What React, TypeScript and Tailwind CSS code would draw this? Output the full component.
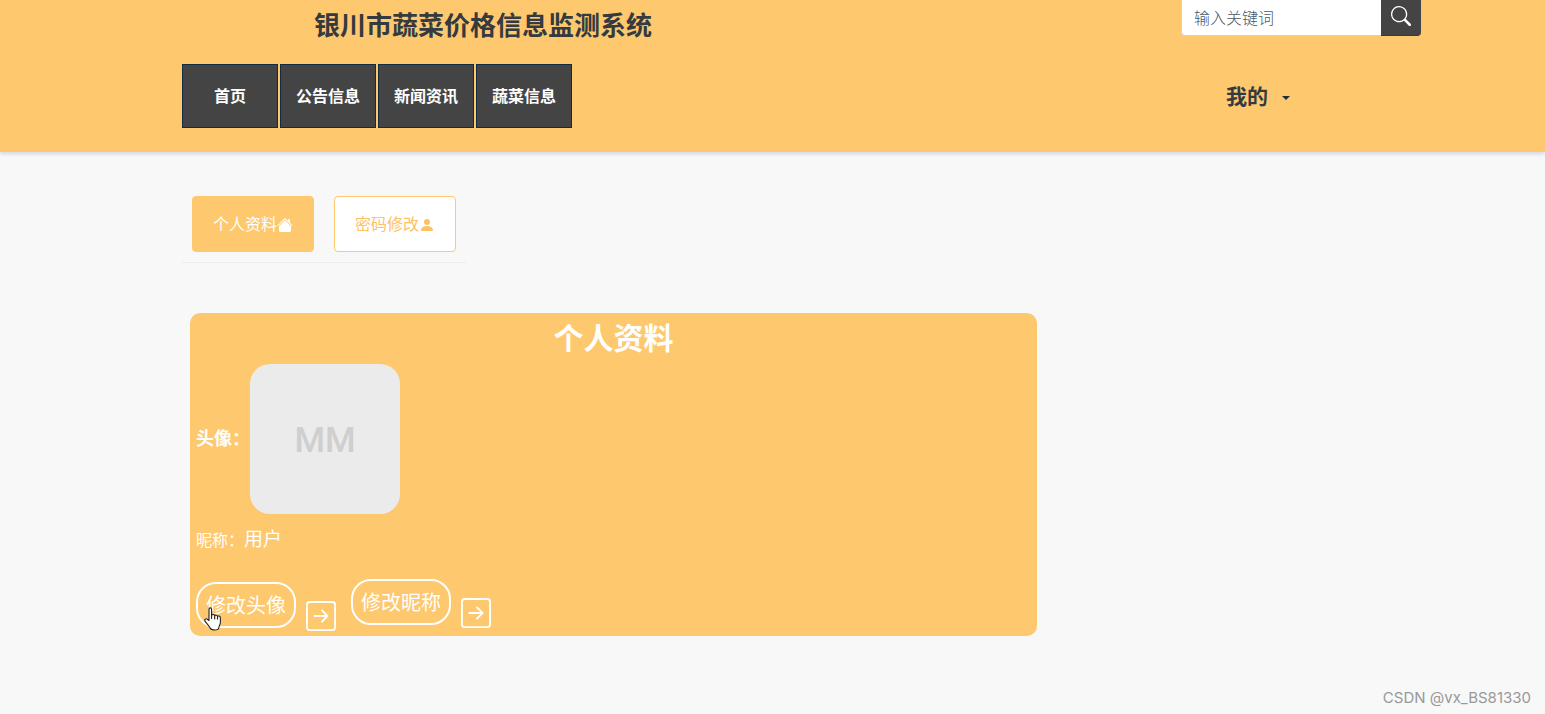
import {
  BsArrowRightSquare,
  BsHouseFill,
  BsPersonFill,
  BsSearch,
} from "react-icons/bs";

const navItems = ["首页", "公告信息", "新闻资讯", "蔬菜信息"];

function Header() {
  return (
    <header className="bg-[#fec86e] pb-6 shadow-[0_2px_4px_rgba(0,30,90,0.15)]">
      <div className="mx-auto max-w-[1297px]">
        <div className="flex items-start justify-between pl-[190px]">
          <h1 className="pt-1 text-[26px] leading-10 font-bold text-[#343a40]">
            银川市蔬菜价格信息监测系统
          </h1>
          <form className="flex h-9" onSubmit={(e) => e.preventDefault()}>
            <input
              type="search"
              aria-label="输入关键词"
              placeholder="输入关键词"
              className="w-[200px] rounded-bl border-b border-l border-[#ced4da] bg-white px-3 pb-0.5 text-base font-light outline-none placeholder:text-[#495869]"
            />
            <button
              type="submit"
              aria-label="搜索"
              className="flex w-10 items-center justify-center rounded-br border-b border-[#343a40] bg-[#444] pb-1 text-white"
            >
              <BsSearch size={20} />
            </button>
          </form>
        </div>

        <div className="flex items-center justify-between pt-5 pr-[131px] pl-[58px]">
          <nav className="flex gap-0.5">
            {navItems.map((item) => (
              <a
                key={item}
                href="#"
                className="flex h-16 w-24 items-center justify-center border border-[#142c42] bg-[#444] pb-0.5 text-base font-bold text-white"
              >
                {item}
              </a>
            ))}
          </nav>
          <button
            type="button"
            className="flex items-center gap-[14px] text-[21px] font-bold text-[#343a40]"
          >
            我的
            <span className="mt-1 border-x-4 border-t-4 border-x-transparent border-t-[#212d3a]" />
          </button>
        </div>
      </div>
    </header>
  );
}

function Tabs() {
  return (
    <div className="flex w-fit gap-5 border-b border-[#ececec] p-2.5">
      <button
        type="button"
        className="flex h-14 w-[122px] items-center justify-center rounded border border-[#fec86e] bg-[#fec86e] pb-0.5 text-base text-white"
      >
        个人资料
        <BsHouseFill size={16} className="mt-1" />
      </button>
      <button
        type="button"
        className="flex h-14 w-[122px] items-center justify-center rounded border border-[#fec86e] bg-white pb-0.5 text-base text-[#fdc266]"
      >
        密码修改
        <BsPersonFill size={16} className="mt-1" />
      </button>
    </div>
  );
}

function ActionButton({ label }: { label: string }) {
  return (
    <button type="button" className="flex h-[49px] gap-2.5 text-xl text-white">
      <span className="flex h-[46px] w-[100px] items-center justify-center rounded-[20px] border-2 border-white">
        {label}
      </span>
      <BsArrowRightSquare size={30} className="self-end" />
    </button>
  );
}

function HandCursor() {
  return (
    <svg
      viewBox="0 0 18 24"
      className="pointer-events-none absolute top-7 left-2 h-6 w-[18px]"
      fill="#fff"
      stroke="#222"
      strokeWidth="1.1"
      strokeLinejoin="round"
      strokeLinecap="round"
    >
      <path d="M5 13.5V2.4C5 .4 7.6 .4 7.6 2.4v6c.4-1.3 3-1.1 3.1.4.5-1 2.6-.8 2.8.6.7-.8 2.9-.5 2.9 1.5v4.600c0 2-1.400 3.200-1.600 5.200-.2 1.800-1.800 2.300-4 2.300-2.500 0-4-.5-4.500-1.800-.8-2-3.500-4.600-5.200-6.900-1.100-1.700.8-3.200 2.200-2.100z" />
      <path d="M7.6 8v3.5M10.7 9v3M13.5 9.6v2.5" fill="none" />
    </svg>
  );
}

function ProfileCard() {
  return (
    <section className="ml-2 max-w-[847px] rounded-[10px] bg-[#fec86e] px-1.5 pb-[5px] text-white">
      <h2 className="pb-1 text-center text-[30px] leading-[47px] font-bold">
        个人资料
      </h2>
      <div className="flex items-center">
        <span className="w-[54px] pb-1 text-lg font-bold">头像：</span>
        <div className="flex size-[150px] items-center justify-center rounded-[20px] bg-[#ebebeb] pt-1 font-['Roboto',sans-serif] text-[35px] font-medium text-[#cfcfcf]">
          MM
        </div>
      </div>
      <div className="flex h-[65px] items-center pb-4">
        <span className="text-base">昵称：</span>
        <span className="text-[19px]">用户</span>
      </div>
      <div className="relative flex h-[52px] gap-[15px]">
        <div className="self-end">
          <ActionButton label="修改头像" />
        </div>
        <div className="self-start">
          <ActionButton label="修改昵称" />
        </div>
        <HandCursor />
      </div>
    </section>
  );
}

export default function App() {
  return (
    <div className="relative min-h-screen bg-[#f8f8f8] font-['Noto_Sans_CJK_SC',sans-serif]">
      <Header />
      <main className="mx-auto max-w-[1297px] pt-[34px] pl-[58px]">
        <Tabs />
        <div className="pt-[50px]">
          <ProfileCard />
        </div>
      </main>
      <p className="absolute right-[14px] bottom-1 font-['Inter',sans-serif] text-[15px] leading-6 text-[#999]">
        CSDN @vx_BS81330
      </p>
    </div>
  );
}
